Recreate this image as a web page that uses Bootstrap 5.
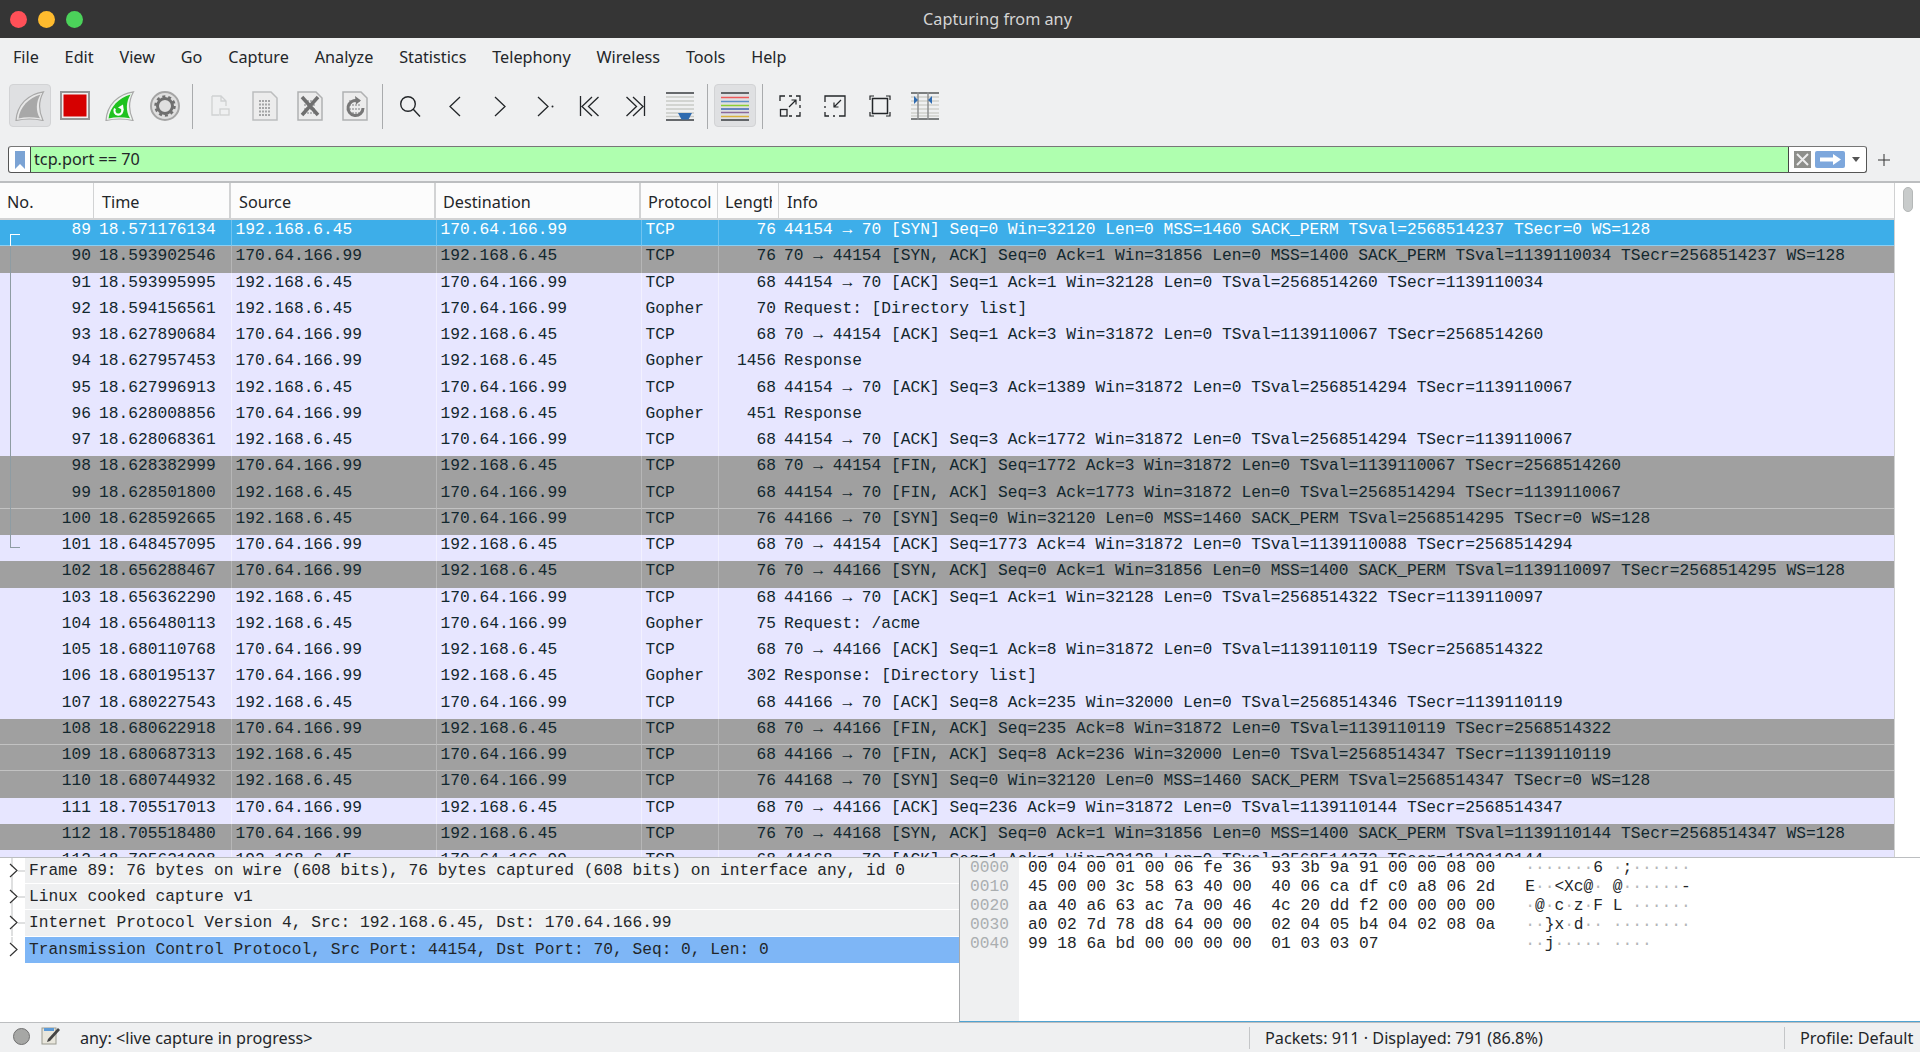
<!DOCTYPE html>
<html lang="en"><head><meta charset="utf-8"><title>Capturing from any</title>
<link rel="stylesheet" href="https://cdn.jsdelivr.net/npm/bootstrap@5.3.0/dist/css/bootstrap.min.css">
<style>
html,body{height:100%;overflow:hidden}
body{font-family:"Noto Sans",sans-serif;font-size:16.23px;color:#232629;background:#eff0f1}
.title-bar{height:38px;background:#353535;color:#d4d4d4;flex:none}
.lights{width:75px;flex:none;padding-left:10px;gap:11px}
.light{width:17px;height:17px;border-radius:50%;flex:none}
.light-r{background:#ff5058}.light-y{background:#febb2e}.light-g{background:#4bd25a}
.menu-bar{height:39px;flex:none}
.menu-bar a{padding:0 12.9px;color:#232629;text-decoration:none;line-height:39px}
.tool-bar{height:50px;padding:7px 0 0 9px;gap:3px;flex:none}
.tb-btn{width:42px;height:43px;padding:0;border:1px solid transparent;border-radius:4px;display:flex;align-items:center;justify-content:center;flex:none}
.tb-btn.on{background:#dfe0e2;border-color:#d2d3d5}
.tb-sep{width:1px;height:45px;margin:0 3px;background:#a9abad;flex:none}
.filter-wrap{padding:19px 0 8px 8px;box-sizing:content-box;flex:none;height:27px}
.filter{width:1859px;height:27px;border:1px solid #555;border-top-color:#777;border-radius:3px;background:#fff;overflow:hidden;flex:none}
.fbook{width:22px;border-right:1px solid #444}
.ftext{background:#afffaf;line-height:25px;padding-left:3px;border-right:1px solid #444;width:1758px;flex:none}
.fx{width:17px;height:17px;background:#8e8f8b;margin-left:5px}
.farrow{width:30px;height:17px;background:#7da7dc;border-radius:2px;margin-left:4px}
.fcaret{width:0;height:0;border:4.5px solid transparent;border-top:5px solid #555;border-bottom:0;margin-left:7px}
.fplus{width:14px;height:14px;margin-left:10px}
.list-area{flex:1 1 0;min-height:0;border-top:2px solid #bcbec0;background:#fff}
.list-main{width:1895px;flex:none;overflow:hidden;position:relative;border-right:1px solid #d0d1d2}
.scroll-col{flex:1;background:#fff}
.thumb{width:10px;height:25px;background:#c8cbcb;border:1px solid #b5b8b8;border-radius:5px;margin:4px 0 0 8px}
.pkts{table-layout:fixed;width:1894px;font-family:"Liberation Mono",monospace;font-size:16.23px;border-collapse:separate;border-spacing:0}
.pkts.table>thead>tr>th{height:37px;padding:3px 0 0 8px;font:400 16.23px/32px "Noto Sans",sans-serif;color:#232629;background:#fcfcfc;border-right:2px solid #d2d3d4;border-bottom:2px solid #d2d3d4;white-space:nowrap;overflow:hidden;box-shadow:none}
.pkts.table>thead>tr>th.c1{padding-left:7px;border-right-width:1px}
.pkts.table>thead>tr>th.c4,.pkts.table>thead>tr>th.c5,.pkts.table>thead>tr>th.c6{padding-left:7px}
.pkts.table>thead>tr>th.c5,.pkts.table>thead>tr>th.c6{border-right-width:1px}
.pkts.table>thead>tr>th:last-child{border-right:0;padding-left:8px}
.hdr-clip{display:block;overflow:hidden;width:47px}
.c1{width:94px}.c2{width:137px}.c3{width:205px}.c4{width:205px}.c5{width:77px}.c6{width:61px}
.pkts.table>tbody>tr>td{padding:0 0 7px 3.5px;line-height:19px;height:26.26px;background:#e7e6ff;color:#12272e;white-space:nowrap;overflow:hidden;border:0;border-left:1px solid #f2f1ff;box-shadow:none;vertical-align:top}
.pkts.table>tbody>tr.g>td{background:#a0a0a0;border-left-color:#b6b6b6}
.pkts.table>tbody>tr.s>td{background:#3daee9;color:#fff;border-left-color:#70c3ef}
.pkts.table>tbody>tr.b>td{border-bottom:1px solid #c2c2c2;padding-bottom:6px}
.pkts.table>tbody>tr.s.b>td{border-bottom-color:#8ccff2}
.pkts.table>tbody>tr>td.n{text-align:right;padding-top:0;padding-left:0;padding-right:3px;border-left:0}
.pkts.table>tbody>tr>td.t{padding-left:5px;border-left:0}
.pkts.table>tbody>tr>td.l{text-align:right;padding-top:0;padding-left:0;padding-right:3px}
.pkts.table>tbody>tr>td.i{border-left:0;padding-left:5px}
.rel{position:absolute;left:10px;top:63px;width:10px;height:302px;border:solid #8e9ca3;border-width:0 0 1px 1px}
.rel-top{position:absolute;left:10px;top:51px;width:10px;height:12px;border:solid #fff;border-width:1px 0 0 1px}
.detail{height:165px;flex:none;border-top:1px solid #bcbec0;background:#fff}
.tree-pane{width:959px;flex:none;overflow:hidden;font-family:"Liberation Mono",monospace;font-size:16.23px;color:#232629}
.tree-row{height:26.2px;line-height:26px}
.tree-tw{width:25px;height:26px;flex:none}
.tree-txt{flex:1;background:#eff0f1;border-bottom:1px solid #fff;padding-left:4px;white-space:pre}
.tree-row.sel .tree-txt{background:#7eb6f6;border-bottom:0}
.hex-pane{flex:1;border-left:1px solid #a8aaac;border-bottom:1px solid #4fa3d1;font-family:"Liberation Mono",monospace;font-size:16.23px;line-height:19px;white-space:pre;min-width:0}
.hex-off{width:59px;background:#eff0f1;color:#aaaeb0;text-align:right;padding:0 10px 0 0;flex:none}
.hex-body{padding:0 0 0 9px;color:#232629}
.hex-asc{margin-left:30px}
.dt{color:#b4b6b8}
.status-bar{height:30px;flex:none;border-top:1px solid #bcbec0;background:#eff0f1}
.st-a{padding-left:80px;width:1249px;flex:none;position:relative;line-height:30px}
.st-b{border-left:1px solid #c4c6c8;height:22px;line-height:22px;padding-left:15px;width:535px;flex:none;margin-top:4px}
.st-c{border-left:1px solid #c4c6c8;height:22px;line-height:22px;padding-left:15px;flex:1;margin-top:4px;white-space:nowrap}
.st-dot{position:absolute;left:13px;top:5px;width:17px;height:17px;border-radius:50%;background:#a6a7a5;border:1px solid #707070}
.st-note{position:absolute;left:41px;top:3px}
</style></head>
<body class="d-flex flex-column">
<div class="title-bar d-flex align-items-center">
 <div class="lights d-flex"><span class="light light-r"></span><span class="light light-y"></span><span class="light light-g"></span></div>
 <div class="flex-grow-1 text-center">Capturing from any</div>
</div>
<nav class="menu-bar d-flex"><a href="#">File</a><a href="#">Edit</a><a href="#">View</a><a href="#">Go</a><a href="#">Capture</a><a href="#">Analyze</a><a href="#">Statistics</a><a href="#">Telephony</a><a href="#">Wireless</a><a href="#">Tools</a><a href="#">Help</a></nav>
<div class="tool-bar d-flex align-items-start">
 <div class="tb-btn on"><svg width="30" height="30" viewBox="0 0 30 30"><path d="M1 29.500C2 14 13 3 28.500 .8C24 9 23 19 28 29.500C19 27.500 10 27.500 1 29.500Z" fill="#e8e8e8" stroke="#a8a8a8" stroke-width="1.200"/><path d="M3.500 27.500C5 16 14 6.500 25.500 3.500C21 11 20.500 20 25 27.300C17 25.800 10 25.800 3.500 27.500Z" fill="#a8a8a8"/></svg></div>
 <div class="tb-btn"><svg width="30" height="30" viewBox="0 0 30 30"><rect x="1" y="1" width="28" height="27" fill="#f0f0f0" stroke="#959595" stroke-width="2"/><rect x="3.500" y="3.500" width="23" height="22" fill="#d60000"/></svg></div>
 <div class="tb-btn"><svg width="30" height="30" viewBox="0 0 30 30"><path d="M1 29.500C2 14 13 3 28.500 .8C24 9 23 19 28 29.500C19 27.500 10 27.500 1 29.500Z" fill="#eef5ee" stroke="#a8a8a8" stroke-width="1.200"/><path d="M3.500 27.500C5 16 14 6.500 25.500 3.500C21 11 20.500 20 25 27.300C17 25.800 10 25.800 3.500 27.500Z" fill="#1fc21f"/><path d="M10 17.500a4 4 0 1 0 7 .5" fill="none" stroke="#fff" stroke-width="2.200"/><path d="M13 16.500l5-3 .8 6z" fill="#fff"/></svg></div>
 <div class="tb-btn"><svg width="30" height="30" viewBox="0 0 30 30"><circle cx="15" cy="15" r="14" fill="#dfdfdf" stroke="#a5a5a5" stroke-width="2"/><circle cx="15" cy="15" r="7.500" fill="none" stroke="#6f6f6f" stroke-width="3"/><circle cx="15" cy="15" r="9.500" fill="none" stroke="#6f6f6f" stroke-width="2.500" stroke-dasharray="3 2.970"/></svg></div>
 <div class="tb-sep"></div>
 <div class="tb-btn"><svg width="30" height="30" viewBox="0 0 30 30"><path d="M7 5h9l5 5v5M14 24H7V5M16 5v5h5" fill="none" stroke="#cfd1d2" stroke-width="1.300"/><rect x="15" y="18" width="9" height="6" fill="none" stroke="#cfd1d2" stroke-width="1.300"/></svg></div>
 <div class="tb-btn"><svg width="30" height="30" viewBox="0 0 30 30"><path d="M3 1h18l6 6v22H3z" fill="#ececec" stroke="#bcbdbe" stroke-width="1.500"/><path d="M9 10h12M9 13.500h12M9 17h12M9 20.500h12M9 24h12" stroke="#a4a5a6" stroke-width="2" stroke-dasharray="2 1"/></svg></div>
 <div class="tb-btn"><svg width="30" height="30" viewBox="0 0 30 30"><path d="M3 1h18l6 6v22H3z" fill="#ececec" stroke="#b0b1b2" stroke-width="1.500"/><path d="M9 10h12M9 14h12M9 18h12M9 22h12" stroke="#b4b5b6" stroke-width="2" stroke-dasharray="2 1"/><path d="M7 6l16 18M23 6L7 24" stroke="#6f6f6f" stroke-width="3.500"/></svg></div>
 <div class="tb-btn"><svg width="30" height="30" viewBox="0 0 30 30"><path d="M3 1h18l6 6v22H3z" fill="#ececec" stroke="#b0b1b2" stroke-width="1.500"/><path d="M9 10h12M9 14h12M9 18h12M9 22h12" stroke="#b4b5b6" stroke-width="2" stroke-dasharray="2 1"/><path d="M23 17a7.500 7.500 0 1 1-5-7" fill="none" stroke="#777" stroke-width="3"/><path d="M15 5l6 4.500-5 4z" fill="#777"/></svg></div>
 <div class="tb-sep"></div>
 <div class="tb-btn"><svg width="30" height="30" viewBox="0 0 30 30"><circle cx="13" cy="13" r="7.300" fill="none" stroke="#232629" stroke-width="1.400"/><path d="M18 18l7 7.500" stroke="#232629" stroke-width="1.400"/></svg></div>
 <div class="tb-btn"><svg width="30" height="30" viewBox="0 0 30 30"><path d="M20 6l-10 9.500L20 25" fill="none" stroke="#232629" stroke-width="1.300"/></svg></div>
 <div class="tb-btn"><svg width="30" height="30" viewBox="0 0 30 30"><path d="M10 6l10 9.500L10 25" fill="none" stroke="#232629" stroke-width="1.300"/></svg></div>
 <div class="tb-btn"><svg width="30" height="30" viewBox="0 0 30 30"><path d="M8 6l10 9.500L8 25" fill="none" stroke="#232629" stroke-width="1.300"/><circle cx="22.500" cy="15.500" r="1" fill="#232629"/></svg></div>
 <div class="tb-btn"><svg width="30" height="30" viewBox="0 0 30 30"><path d="M5.500 5v20M17 6l-10 9.500L17 25M23.500 6l-10 9.500L23.500 25" fill="none" stroke="#232629" stroke-width="1.300"/></svg></div>
 <div class="tb-btn"><svg width="30" height="30" viewBox="0 0 30 30"><path d="M24.500 5v20M13 6l10 9.500L13 25M6.500 6l10 9.500L6.500 25" fill="none" stroke="#232629" stroke-width="1.300"/></svg></div>
 <div class="tb-btn"><svg width="30" height="30" viewBox="0 0 30 30"><path d="M1 2h28M1 29h28" stroke="#3a3d40" stroke-width="1.400"/><path d="M1 6h28M1 10h28M1 14h28M1 18h28M1 22h28M1 25.500h28" stroke="#c9cac6" stroke-width="1.500"/><path d="M13 22h14l-3.500 6.500h-7z" fill="#2f6bb0"/></svg></div>
 <div class="tb-sep"></div>
 <div class="tb-btn on"><svg width="30" height="30" viewBox="0 0 30 30"><path d="M1 2h28M1 29h28" stroke="#3a3d40" stroke-width="1.400"/><path d="M1 6.500h28" stroke="#ee5a5a" stroke-width="1.500"/><path d="M1 10.500h28" stroke="#5f8fc6" stroke-width="1.500"/><path d="M1 14.500h28" stroke="#8ccf33" stroke-width="1.500"/><path d="M1 18h28" stroke="#3d67b5" stroke-width="1.500"/><path d="M1 21.500h28" stroke="#8a6a9a" stroke-width="1.500"/><path d="M1 25.500h28" stroke="#d9b23c" stroke-width="1.500"/></svg></div>
 <div class="tb-sep"></div>
 <div class="tb-btn"><svg width="30" height="30" viewBox="0 0 30 30"><path d="M5 10V5h5M14 5h3M21 5h4v5M25 14v3M25 21v4h-4M14 25h3" fill="none" stroke="#232629" stroke-width="1.300"/><rect x="5.500" y="18.500" width="6.500" height="6.500" fill="none" stroke="#232629" stroke-width="1.300"/><path d="M14 16l7-7M16.500 9h4.500v4.500" fill="none" stroke="#232629" stroke-width="1.200"/></svg></div>
 <div class="tb-btn"><svg width="30" height="30" viewBox="0 0 30 30"><path d="M5 11V5h20v20h-6" fill="none" stroke="#232629" stroke-width="1.300"/><path d="M5 15v2M5 21v4h4M13 25h2" fill="none" stroke="#232629" stroke-width="1.300"/><path d="M21 9l-7 7M14 11.500V16h4.500" fill="none" stroke="#232629" stroke-width="1.200"/></svg></div>
 <div class="tb-btn"><svg width="30" height="30" viewBox="0 0 30 30"><rect x="7.500" y="7.500" width="15" height="15" fill="none" stroke="#232629" stroke-width="1.500"/><path d="M5 9V5h4M21 5h4v4M25 21v4h-4M9 25H5v-4" fill="none" stroke="#232629" stroke-width="1.200"/></svg></div>
 <div class="tb-btn"><svg width="30" height="30" viewBox="0 0 30 30"><path d="M1 2h28M1 28h28" stroke="#55585a" stroke-width="1.300"/><path d="M1 6h28M1 10h28M1 14h28M1 18h28M1 22h28M1 25h28" stroke="#cfd0cc" stroke-width="1.500"/><path d="M8 1v28M18 1v28" stroke="#8e9091" stroke-width="1.500"/><path d="M4 5l4 4-4 4zM22 5l-4 4 4 4z" fill="#2f6bb0"/></svg></div>
</div>
<div class="filter-wrap d-flex align-items-center">
 <div class="filter d-flex align-items-stretch">
  <div class="fbook d-flex align-items-center justify-content-center"><svg width="12" height="18" viewBox="0 0 12 18"><path d="M1 0h10v18l-5-5-5 5z" fill="#7ba3d4"/></svg></div>
  <div class="ftext">tcp.port == 70</div>
  <div class="d-flex align-items-center flex-grow-1">
   <div class="fx"><svg width="17" height="17" viewBox="0 0 17 17" class="d-block"><path d="M3 3l11 11M14 3L3 14" stroke="#eee" stroke-width="2"/></svg></div>
   <div class="farrow"><svg width="30" height="17" viewBox="0 0 30 17" class="d-block"><path d="M5 6.500h13V3l8 5.500-8 5.500v-3.500H5z" fill="#fff"/></svg></div>
   <div class="fcaret"></div>
  </div>
 </div>
 <svg class="fplus" viewBox="0 0 14 14"><path d="M7 1v12M1 7h12" stroke="#333" stroke-width="1"/></svg>
</div>
<div class="list-area d-flex">
 <div class="list-main">
 <table class="table table-borderless mb-0 pkts">
 <thead><tr><th class="c1">No.</th><th class="c2">Time</th><th class="c3">Source</th><th class="c4">Destination</th><th class="c5">Protocol</th><th class="c6"><span class="hdr-clip">Length</span></th><th>Info</th></tr></thead>
 <tbody>
 <tr class="s b"><td class="n">89</td><td class="t">18.571176134</td><td>192.168.6.45</td><td>170.64.166.99</td><td>TCP</td><td class="l">76</td><td class="i">44154 → 70 [SYN] Seq=0 Win=32120 Len=0 MSS=1460 SACK_PERM TSval=2568514237 TSecr=0 WS=128</td></tr>
 <tr class="g"><td class="n">90</td><td class="t">18.593902546</td><td>170.64.166.99</td><td>192.168.6.45</td><td>TCP</td><td class="l">76</td><td class="i">70 → 44154 [SYN, ACK] Seq=0 Ack=1 Win=31856 Len=0 MSS=1400 SACK_PERM TSval=1139110034 TSecr=2568514237 WS=128</td></tr>
 <tr><td class="n">91</td><td class="t">18.593995995</td><td>192.168.6.45</td><td>170.64.166.99</td><td>TCP</td><td class="l">68</td><td class="i">44154 → 70 [ACK] Seq=1 Ack=1 Win=32128 Len=0 TSval=2568514260 TSecr=1139110034</td></tr>
 <tr><td class="n">92</td><td class="t">18.594156561</td><td>192.168.6.45</td><td>170.64.166.99</td><td>Gopher</td><td class="l">70</td><td class="i">Request: [Directory list]</td></tr>
 <tr><td class="n">93</td><td class="t">18.627890684</td><td>170.64.166.99</td><td>192.168.6.45</td><td>TCP</td><td class="l">68</td><td class="i">70 → 44154 [ACK] Seq=1 Ack=3 Win=31872 Len=0 TSval=1139110067 TSecr=2568514260</td></tr>
 <tr><td class="n">94</td><td class="t">18.627957453</td><td>170.64.166.99</td><td>192.168.6.45</td><td>Gopher</td><td class="l">1456</td><td class="i">Response</td></tr>
 <tr><td class="n">95</td><td class="t">18.627996913</td><td>192.168.6.45</td><td>170.64.166.99</td><td>TCP</td><td class="l">68</td><td class="i">44154 → 70 [ACK] Seq=3 Ack=1389 Win=31872 Len=0 TSval=2568514294 TSecr=1139110067</td></tr>
 <tr><td class="n">96</td><td class="t">18.628008856</td><td>170.64.166.99</td><td>192.168.6.45</td><td>Gopher</td><td class="l">451</td><td class="i">Response</td></tr>
 <tr><td class="n">97</td><td class="t">18.628068361</td><td>192.168.6.45</td><td>170.64.166.99</td><td>TCP</td><td class="l">68</td><td class="i">44154 → 70 [ACK] Seq=3 Ack=1772 Win=31872 Len=0 TSval=2568514294 TSecr=1139110067</td></tr>
 <tr class="g"><td class="n">98</td><td class="t">18.628382999</td><td>170.64.166.99</td><td>192.168.6.45</td><td>TCP</td><td class="l">68</td><td class="i">70 → 44154 [FIN, ACK] Seq=1772 Ack=3 Win=31872 Len=0 TSval=1139110067 TSecr=2568514260</td></tr>
 <tr class="g b"><td class="n">99</td><td class="t">18.628501800</td><td>192.168.6.45</td><td>170.64.166.99</td><td>TCP</td><td class="l">68</td><td class="i">44154 → 70 [FIN, ACK] Seq=3 Ack=1773 Win=31872 Len=0 TSval=2568514294 TSecr=1139110067</td></tr>
 <tr class="g"><td class="n">100</td><td class="t">18.628592665</td><td>192.168.6.45</td><td>170.64.166.99</td><td>TCP</td><td class="l">76</td><td class="i">44166 → 70 [SYN] Seq=0 Win=32120 Len=0 MSS=1460 SACK_PERM TSval=2568514295 TSecr=0 WS=128</td></tr>
 <tr><td class="n">101</td><td class="t">18.648457095</td><td>170.64.166.99</td><td>192.168.6.45</td><td>TCP</td><td class="l">68</td><td class="i">70 → 44154 [ACK] Seq=1773 Ack=4 Win=31872 Len=0 TSval=1139110088 TSecr=2568514294</td></tr>
 <tr class="g"><td class="n">102</td><td class="t">18.656288467</td><td>170.64.166.99</td><td>192.168.6.45</td><td>TCP</td><td class="l">76</td><td class="i">70 → 44166 [SYN, ACK] Seq=0 Ack=1 Win=31856 Len=0 MSS=1400 SACK_PERM TSval=1139110097 TSecr=2568514295 WS=128</td></tr>
 <tr><td class="n">103</td><td class="t">18.656362290</td><td>192.168.6.45</td><td>170.64.166.99</td><td>TCP</td><td class="l">68</td><td class="i">44166 → 70 [ACK] Seq=1 Ack=1 Win=32128 Len=0 TSval=2568514322 TSecr=1139110097</td></tr>
 <tr><td class="n">104</td><td class="t">18.656480113</td><td>192.168.6.45</td><td>170.64.166.99</td><td>Gopher</td><td class="l">75</td><td class="i">Request: /acme</td></tr>
 <tr><td class="n">105</td><td class="t">18.680110768</td><td>170.64.166.99</td><td>192.168.6.45</td><td>TCP</td><td class="l">68</td><td class="i">70 → 44166 [ACK] Seq=1 Ack=8 Win=31872 Len=0 TSval=1139110119 TSecr=2568514322</td></tr>
 <tr><td class="n">106</td><td class="t">18.680195137</td><td>170.64.166.99</td><td>192.168.6.45</td><td>Gopher</td><td class="l">302</td><td class="i">Response: [Directory list]</td></tr>
 <tr><td class="n">107</td><td class="t">18.680227543</td><td>192.168.6.45</td><td>170.64.166.99</td><td>TCP</td><td class="l">68</td><td class="i">44166 → 70 [ACK] Seq=8 Ack=235 Win=32000 Len=0 TSval=2568514346 TSecr=1139110119</td></tr>
 <tr class="g b"><td class="n">108</td><td class="t">18.680622918</td><td>170.64.166.99</td><td>192.168.6.45</td><td>TCP</td><td class="l">68</td><td class="i">70 → 44166 [FIN, ACK] Seq=235 Ack=8 Win=31872 Len=0 TSval=1139110119 TSecr=2568514322</td></tr>
 <tr class="g b"><td class="n">109</td><td class="t">18.680687313</td><td>192.168.6.45</td><td>170.64.166.99</td><td>TCP</td><td class="l">68</td><td class="i">44166 → 70 [FIN, ACK] Seq=8 Ack=236 Win=32000 Len=0 TSval=2568514347 TSecr=1139110119</td></tr>
 <tr class="g"><td class="n">110</td><td class="t">18.680744932</td><td>192.168.6.45</td><td>170.64.166.99</td><td>TCP</td><td class="l">76</td><td class="i">44168 → 70 [SYN] Seq=0 Win=32120 Len=0 MSS=1460 SACK_PERM TSval=2568514347 TSecr=0 WS=128</td></tr>
 <tr><td class="n">111</td><td class="t">18.705517013</td><td>170.64.166.99</td><td>192.168.6.45</td><td>TCP</td><td class="l">68</td><td class="i">70 → 44166 [ACK] Seq=236 Ack=9 Win=31872 Len=0 TSval=1139110144 TSecr=2568514347</td></tr>
 <tr class="g"><td class="n">112</td><td class="t">18.705518480</td><td>170.64.166.99</td><td>192.168.6.45</td><td>TCP</td><td class="l">76</td><td class="i">70 → 44168 [SYN, ACK] Seq=0 Ack=1 Win=31856 Len=0 MSS=1400 SACK_PERM TSval=1139110144 TSecr=2568514347 WS=128</td></tr>
 <tr><td class="n">113</td><td class="t">18.705621908</td><td>192.168.6.45</td><td>170.64.166.99</td><td>TCP</td><td class="l">68</td><td class="i">44168 → 70 [ACK] Seq=1 Ack=1 Win=32128 Len=0 TSval=2568514372 TSecr=1139110144</td></tr>
 </tbody></table>
 <div class="rel"></div><div class="rel-top"></div>
 </div>
 <div class="scroll-col"><div class="thumb"></div></div>
</div>
<div class="detail d-flex">
 <div class="tree-pane">
  <div class="tree-row d-flex"><svg class="tree-tw" viewBox="0 0 25 26"><path d="M12 0v9M12 17v9" stroke="#bfc1c2"/><path d="M10 6l7 6.500-7 6.500" fill="none" stroke="#333" stroke-width="1.200"/><path d="M18 13h7" stroke="#bfc1c2"/></svg><div class="tree-txt">Frame 89: 76 bytes on wire (608 bits), 76 bytes captured (608 bits) on interface any, id 0</div></div>
  <div class="tree-row d-flex"><svg class="tree-tw" viewBox="0 0 25 26"><path d="M12 0v9M12 17v9" stroke="#bfc1c2"/><path d="M10 6l7 6.500-7 6.500" fill="none" stroke="#333" stroke-width="1.200"/><path d="M18 13h7" stroke="#bfc1c2"/></svg><div class="tree-txt">Linux cooked capture v1</div></div>
  <div class="tree-row d-flex"><svg class="tree-tw" viewBox="0 0 25 26"><path d="M12 0v9M12 17v9" stroke="#bfc1c2"/><path d="M10 6l7 6.500-7 6.500" fill="none" stroke="#333" stroke-width="1.200"/><path d="M18 13h7" stroke="#bfc1c2"/></svg><div class="tree-txt">Internet Protocol Version 4, Src: 192.168.6.45, Dst: 170.64.166.99</div></div>
  <div class="tree-row sel d-flex"><svg class="tree-tw" viewBox="0 0 25 26"><path d="M12 0v6" stroke="#bfc1c2"/><path d="M10 6l7 6.500-7 6.500" fill="none" stroke="#333" stroke-width="1.200"/></svg><div class="tree-txt">Transmission Control Protocol, Src Port: 44154, Dst Port: 70, Seq: 0, Len: 0</div></div>
 </div>
 <div class="hex-pane d-flex">
  <div class="hex-off">0000
0010
0020
0030
0040</div>
  <div class="hex-body">00 04 00 01 00 06 fe 36  93 3b 9a 91 00 00 08 00<span class="hex-asc"><span class="dt">·······</span>6 <span class="dt">·</span>;<span class="dt">······</span></span>
45 00 00 3c 58 63 40 00  40 06 ca df c0 a8 06 2d<span class="hex-asc">E<span class="dt">··</span>&lt;Xc@<span class="dt">·</span> @<span class="dt">······</span>-</span>
aa 40 a6 63 ac 7a 00 46  4c 20 dd f2 00 00 00 00<span class="hex-asc"><span class="dt">·</span>@<span class="dt">·</span>c<span class="dt">·</span>z<span class="dt">·</span>F L <span class="dt">······</span></span>
a0 02 7d 78 d8 64 00 00  02 04 05 b4 04 02 08 0a<span class="hex-asc"><span class="dt">··</span>}x<span class="dt">·</span>d<span class="dt">··</span> <span class="dt">········</span></span>
99 18 6a bd 00 00 00 00  01 03 03 07            <span class="hex-asc"><span class="dt">··</span>j<span class="dt">·····</span> <span class="dt">····</span></span></div>
 </div>
</div>
<div class="status-bar d-flex">
 <div class="st-a"><span class="st-dot"></span><svg class="st-note" width="20" height="20" viewBox="0 0 20 20"><rect x="1" y="2" width="14" height="16" fill="#e8e6dc" stroke="#9a9a90"/><path d="M3 2h10v3H3z" fill="#5c9ad6"/><path d="M7 13L17 2l2 2L9 15l-3 1z" fill="#444"/></svg>any: &lt;live capture in progress&gt;</div>
 <div class="st-b">Packets: 911 · Displayed: 791 (86.8%)</div>
 <div class="st-c">Profile: Default</div>
</div>
</body></html>
